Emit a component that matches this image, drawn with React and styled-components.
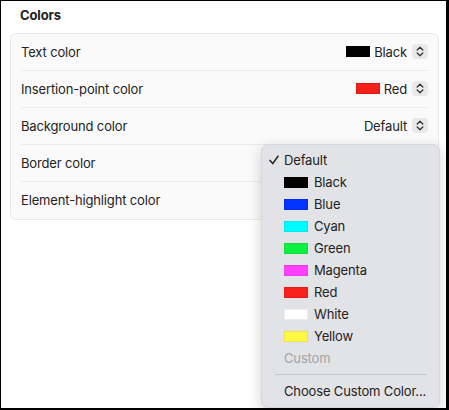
import React from 'react';
import styled, { createGlobalStyle } from 'styled-components';

const GlobalStyle = createGlobalStyle`
  html, body {
    margin: 0;
    padding: 0;
    background: #ffffff;
  }
  body {
    font-family: Inter, "Liberation Sans", sans-serif;
    letter-spacing: -0.15px;
    -webkit-font-smoothing: antialiased;
  }
`;

const rows = [
  { label: 'Text color', value: 'Black', swatch: '#000000' },
  { label: 'Insertion-point color', value: 'Red', swatch: '#f5201a' },
  { label: 'Background color', value: 'Default' },
  { label: 'Border color' },
  { label: 'Element-highlight color' },
];

const menuItems = [
  { name: 'Black', color: '#000000' },
  { name: 'Blue', color: '#0433ff' },
  { name: 'Cyan', color: '#00fbff' },
  { name: 'Green', color: '#10f040' },
  { name: 'Magenta', color: '#ff40ff' },
  { name: 'Red', color: '#f8201a' },
  { name: 'White', color: '#ffffff' },
  { name: 'Yellow', color: '#fff845' },
];

const Frame = styled.div`
  position: relative;
  box-sizing: border-box;
  width: 449px;
  height: 410px;
  overflow: hidden;
  background: #ffffff;
  border-style: solid;
  border-color: #000000;
  border-width: 1px 3px 2px 1px;
`;

const Title = styled.div`
  height: 28px;
  margin-bottom: 4px;
  padding-left: 19px;
  display: flex;
  align-items: center;
  font-size: 13px;
  font-weight: 700;
  color: #222222;
`;

const Card = styled.div`
  margin: 0 7px 0 9px;
  border: 1px solid #e9e9e9;
  border-radius: 6px;
  background: #fafafa;
  padding: 0 10px;
`;

const Row = styled.div`
  height: 37px;
  padding-bottom: 1px;
  box-sizing: border-box;
  display: flex;
  align-items: center;
  justify-content: space-between;
  font-size: 13px;
  color: #232323;
  border-bottom: ${(p) => (p.$last ? 'none' : '1px solid #ebebeb')};
`;

const Value = styled.div`
  display: flex;
  align-items: center;
  gap: 4px;
`;

const Swatch = styled.span`
  display: inline-block;
  width: 24px;
  height: 11px;
  background: ${(p) => p.$color};
  box-shadow: inset 0 0 0 1px rgba(0, 0, 0, 0.12);
`;

const Stepper = styled.span`
  display: inline-flex;
  align-items: center;
  justify-content: center;
  width: 16px;
  height: 15px;
  margin-left: 1px;
  border-radius: 4px;
  background: #e9e9e9;
`;

const Menu = styled.div`
  position: absolute;
  left: 260px;
  top: 143px;
  width: 179px;
  box-sizing: border-box;
  padding: 4px 0 5px;
  border-radius: 7px;
  background: #e2e3e6;
  border: 1px solid #d6d7da;
  box-shadow: 0 4px 14px rgba(0, 0, 0, 0.18);
  font-size: 13px;
  color: #222222;
`;

const Item = styled.div`
  height: 22px;
  display: flex;
  align-items: center;
  padding-left: 22px;
  gap: 6px;
  color: ${(p) => (p.$disabled ? '#a3a4a7' : '#222222')};
`;

const Check = styled.span`
  display: inline-flex;
  width: 14px;
  margin-left: -15px;
  margin-right: -5px;
`;

const Divider = styled.div`
  height: 1px;
  margin: 5px 12px 5px 13px;
  background: #c6c7ca;
`;

const MenuSwatch = styled(Swatch)`
  box-shadow: inset 0 0 0 1px rgba(0, 0, 0, 0.08);
`;

const Chevrons = () => (
  <svg width="8" height="11" viewBox="0 0 8 11" fill="none">
    <path d="M1.2 4 L4 1.3 L6.8 4" stroke="#333" strokeWidth="1.3" strokeLinecap="round" strokeLinejoin="round" />
    <path d="M1.2 7 L4 9.7 L6.8 7" stroke="#333" strokeWidth="1.3" strokeLinecap="round" strokeLinejoin="round" />
  </svg>
);

const CheckMark = () => (
  <svg width="10" height="10" viewBox="0 0 10 10" fill="none">
    <path d="M1 5.4 L3.8 8.6 L9 1.2" stroke="#222" strokeWidth="1.5" strokeLinecap="round" strokeLinejoin="round" />
  </svg>
);

export default function App() {
  return (
    <>
      <GlobalStyle />
      <Frame>
        <Title>Colors</Title>
        <Card>
          {rows.map((r, i) => (
            <Row key={r.label} $last={i === rows.length - 1}>
              <span>{r.label}</span>
              {r.value && (
                <Value>
                  {r.swatch && <Swatch $color={r.swatch} />}
                  <span>{r.value}</span>
                  <Stepper>
                    <Chevrons />
                  </Stepper>
                </Value>
              )}
            </Row>
          ))}
        </Card>
        <Menu>
          <Item>
            <Check>
              <CheckMark />
            </Check>
            <span>Default</span>
          </Item>
          {menuItems.map((m) => (
            <Item key={m.name}>
              <MenuSwatch $color={m.color} />
              <span>{m.name}</span>
            </Item>
          ))}
          <Item $disabled>Custom</Item>
          <Divider />
          <Item>Choose Custom Color...</Item>
        </Menu>
      </Frame>
    </>
  );
}
